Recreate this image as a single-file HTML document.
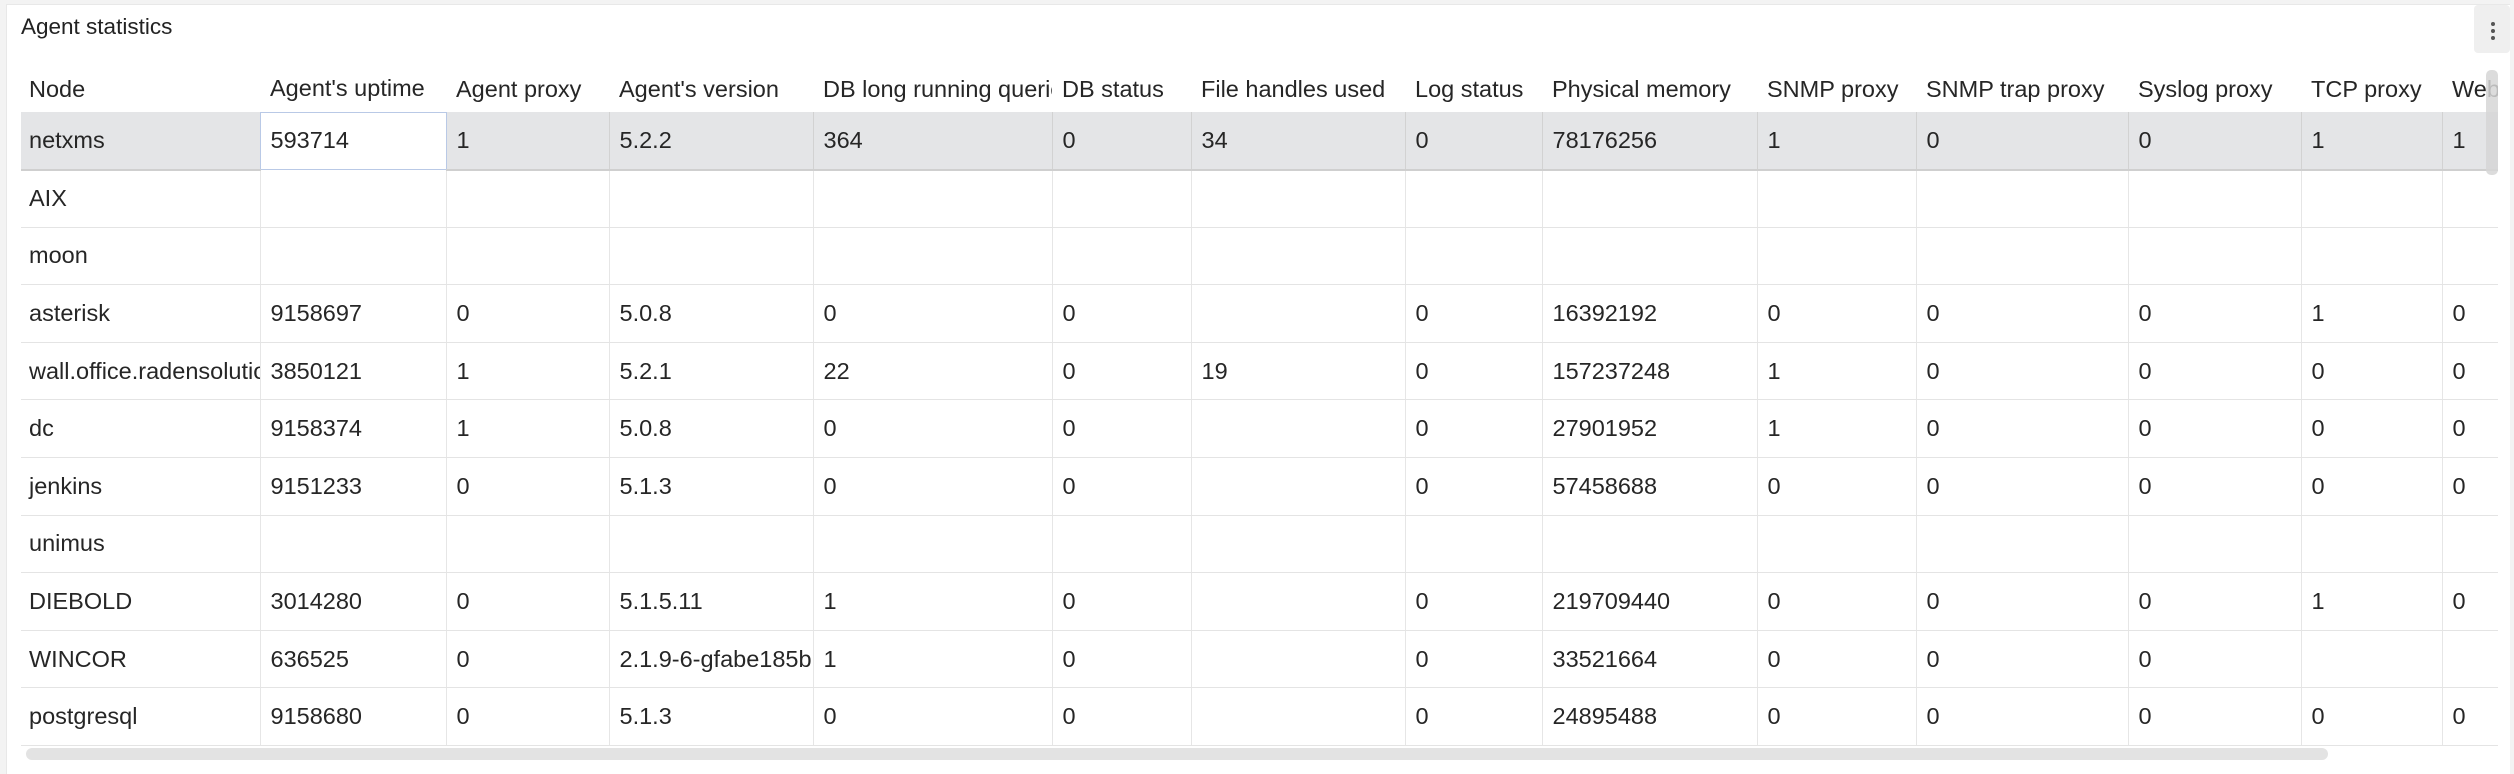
<!DOCTYPE html>
<html><head><meta charset="utf-8"><style>
html,body{margin:0;padding:0;width:2514px;height:773px;overflow:hidden;background:#f3f3f3;font-family:"Liberation Sans",Arial,sans-serif;color:#262626}
.panel{position:absolute;left:6px;top:4px;width:2503px;height:769px;background:#fff;border-left:1px solid #e8e8e8;border-top:1px solid #e8e8e8}
.title{position:absolute;left:21px;top:14px;font-size:22.5px;color:#222}
.menu{position:absolute;left:2474px;top:5px;width:36px;height:48px;background:#efefef;border-radius:4px}
.menu i{position:absolute;left:17px;width:4px;height:4px;border-radius:2px;background:#555}
.grid{position:absolute;left:21px;top:60px;width:2477px;height:688px;overflow:hidden}
table{border-collapse:collapse;table-layout:fixed;font-size:23.5px;width:2511px}
td,th{overflow:hidden;white-space:nowrap;padding:0 0 0 10px;text-align:left;font-weight:normal;box-sizing:border-box}
th{height:52px;padding-top:6px}
td{height:57.6px;border-left:1px solid #e6e6e6;border-bottom:1.5px solid #e4e4e4}
td:first-child{border-left:none;padding-left:8px}
th:first-child{padding-left:8px}
tr.sel td{background:#e4e5e7;border-left-color:#d2d2d2;border-bottom:2px solid #cfcfcf}
tr.sel td.cur{background:#fff;border:1.5px solid #b9c9e6}
.hs{position:absolute;left:26px;top:748px;width:2302px;height:12px;background:#e3e3e3;border-radius:6px}
.vs{position:absolute;left:2486px;top:70px;width:12px;height:105px;background:#d6d6d6;border-radius:5px;opacity:.85}
</style></head><body>
<div class="panel"></div>
<div class="title">Agent statistics</div>
<div class="menu"><i style="top:17px"></i><i style="top:24px"></i><i style="top:31px"></i></div>
<div class="grid"><table>
<colgroup><col style="width:239px"><col style="width:186px"><col style="width:163px"><col style="width:204px"><col style="width:239px"><col style="width:139px"><col style="width:214px"><col style="width:137px"><col style="width:215px"><col style="width:159px"><col style="width:212px"><col style="width:173px"><col style="width:141px"><col style="width:90px"></colgroup>
<tr><th>Node</th><th>Agent's uptime</th><th>Agent proxy</th><th>Agent's version</th><th>DB long running queries</th><th>DB status</th><th>File handles used</th><th>Log status</th><th>Physical memory</th><th>SNMP proxy</th><th>SNMP trap proxy</th><th>Syslog proxy</th><th>TCP proxy</th><th>Web proxy</th></tr>
<tr class="sel"><td>netxms</td><td class="cur">593714</td><td>1</td><td>5.2.2</td><td>364</td><td>0</td><td>34</td><td>0</td><td>78176256</td><td>1</td><td>0</td><td>0</td><td>1</td><td>1</td></tr>
<tr><td>AIX</td><td></td><td></td><td></td><td></td><td></td><td></td><td></td><td></td><td></td><td></td><td></td><td></td><td></td></tr>
<tr><td>moon</td><td></td><td></td><td></td><td></td><td></td><td></td><td></td><td></td><td></td><td></td><td></td><td></td><td></td></tr>
<tr><td>asterisk</td><td>9158697</td><td>0</td><td>5.0.8</td><td>0</td><td>0</td><td></td><td>0</td><td>16392192</td><td>0</td><td>0</td><td>0</td><td>1</td><td>0</td></tr>
<tr><td>wall.office.radensolutions.com</td><td>3850121</td><td>1</td><td>5.2.1</td><td>22</td><td>0</td><td>19</td><td>0</td><td>157237248</td><td>1</td><td>0</td><td>0</td><td>0</td><td>0</td></tr>
<tr><td>dc</td><td>9158374</td><td>1</td><td>5.0.8</td><td>0</td><td>0</td><td></td><td>0</td><td>27901952</td><td>1</td><td>0</td><td>0</td><td>0</td><td>0</td></tr>
<tr><td>jenkins</td><td>9151233</td><td>0</td><td>5.1.3</td><td>0</td><td>0</td><td></td><td>0</td><td>57458688</td><td>0</td><td>0</td><td>0</td><td>0</td><td>0</td></tr>
<tr><td>unimus</td><td></td><td></td><td></td><td></td><td></td><td></td><td></td><td></td><td></td><td></td><td></td><td></td><td></td></tr>
<tr><td>DIEBOLD</td><td>3014280</td><td>0</td><td>5.1.5.11</td><td>1</td><td>0</td><td></td><td>0</td><td>219709440</td><td>0</td><td>0</td><td>0</td><td>1</td><td>0</td></tr>
<tr><td>WINCOR</td><td>636525</td><td>0</td><td>2.1.9-6-gfabe185b</td><td>1</td><td>0</td><td></td><td>0</td><td>33521664</td><td>0</td><td>0</td><td>0</td><td></td><td></td></tr>
<tr><td>postgresql</td><td>9158680</td><td>0</td><td>5.1.3</td><td>0</td><td>0</td><td></td><td>0</td><td>24895488</td><td>0</td><td>0</td><td>0</td><td>0</td><td>0</td></tr>
</table></div>
<div class="hs"></div>
<div class="vs"></div>
</body></html>
